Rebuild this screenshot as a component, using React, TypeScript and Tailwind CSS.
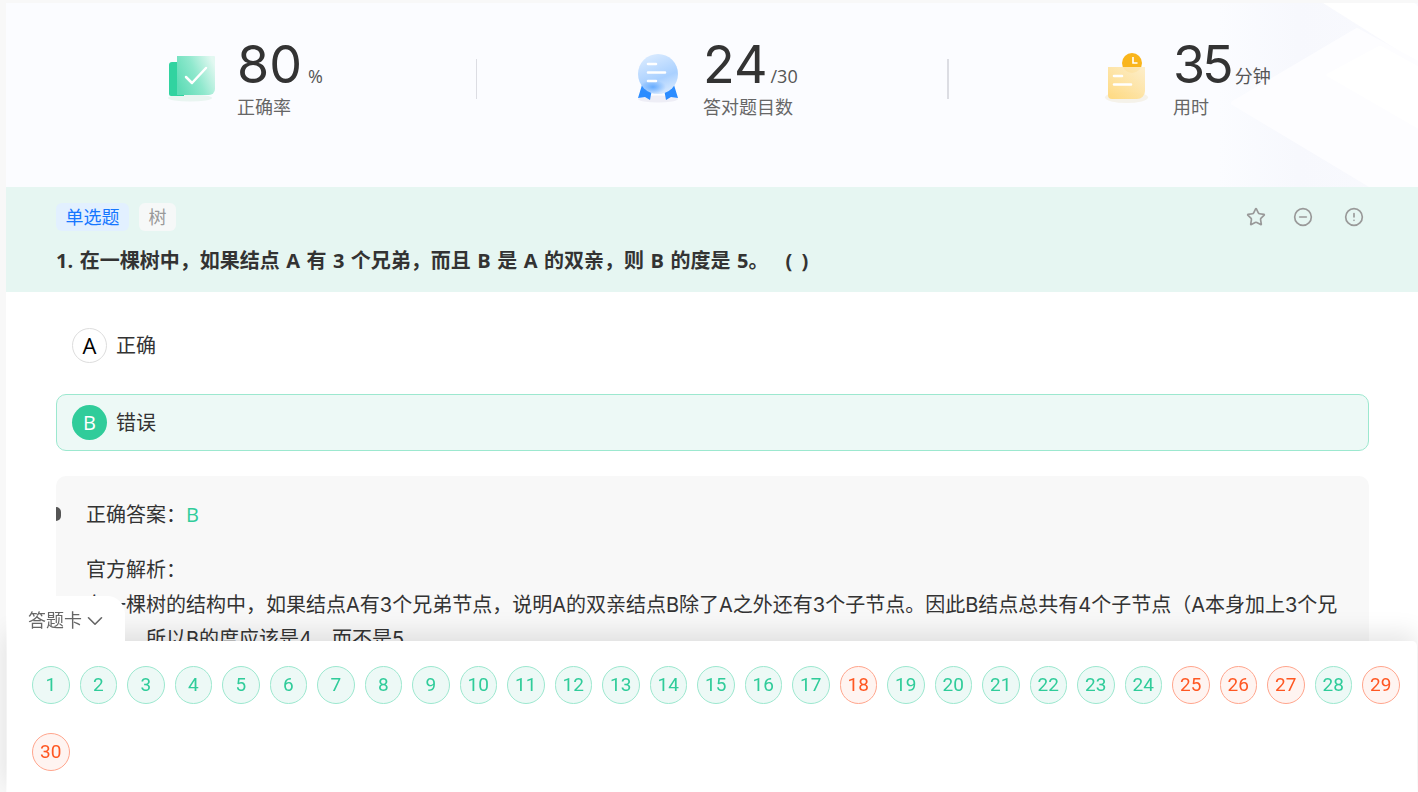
import { ChevronDown, CircleAlert, CircleMinus, Star } from "lucide-react";
import type { ReactNode } from "react";

const WRONG = [18, 25, 26, 27, 29, 30];
const NUMBERS = Array.from({ length: 30 }, (_, i) => i + 1);

// Green check book
const BookIcon = () => (
  <svg viewBox="0 0 52 50" className="w-[52px] h-[50px] shrink-0 overflow-visible">
    <defs>
      <linearGradient id="bookFront" x1="0" y1="0.7" x2="1" y2="0.25">
        <stop offset="0" stopColor="#5fdcb6" />
        <stop offset="0.5" stopColor="#8fe8cd" />
        <stop offset="1" stopColor="#e2f8f1" />
      </linearGradient>
    </defs>
    <ellipse cx="24" cy="44" rx="22" ry="3.5" fill="#e9f5f1" />
    <path d="M6 8h12v34H5a2 2 0 0 1-2-2V11a3 3 0 0 1 3-3z" fill="#31d3a0" />
    <path d="M11 2h37a1 1 0 0 1 1 1v32a6 6 0 0 1-6 6H11z" fill="url(#bookFront)" />
    <path d="M20 23l6 6 14-15" fill="none" stroke="#fff" strokeWidth="2.5" strokeLinecap="round" strokeLinejoin="round" />
  </svg>
);

// Blue medal
const MedalIcon = () => (
  <svg viewBox="0 0 52 50" className="w-[52px] h-[50px] shrink-0 overflow-visible">
    <defs>
      <linearGradient id="medalBall" x1="0.2" y1="0" x2="0.6" y2="1">
        <stop offset="0" stopColor="#dcecff" />
        <stop offset="0.65" stopColor="#a9d0ff" />
        <stop offset="1" stopColor="#d5e8ff" />
      </linearGradient>
      <radialGradient id="medalGlow">
        <stop offset="0" stopColor="#4b9dff" stopOpacity="0.75" />
        <stop offset="1" stopColor="#4b9dff" stopOpacity="0" />
      </radialGradient>
    </defs>
    <ellipse cx="26" cy="45" rx="20" ry="3.5" fill="#eeeef6" />
    <path d="M10 31l10 4-2 11-5-3-7 1z" fill="#2b8cff" />
    <path d="M42 31l-10 4 2 11 5-3 7 1z" fill="#2b8cff" />
    <circle cx="26" cy="20" r="20" fill="url(#medalBall)" />
    <ellipse cx="21" cy="33" rx="13" ry="7" fill="url(#medalGlow)" />
    <path d="M16 10h8M16 18.500h17M16 27h8" stroke="#fff" strokeWidth="2.6" strokeLinecap="round" />
  </svg>
);

// Yellow note with clock
const ClockNoteIcon = () => (
  <svg viewBox="0 0 52 50" className="w-[52px] h-[50px] shrink-0 overflow-visible">
    <defs>
      <linearGradient id="noteBody" x1="0" y1="1" x2="0.9" y2="0">
        <stop offset="0" stopColor="#ffd777" />
        <stop offset="1" stopColor="#fdecc3" />
      </linearGradient>
    </defs>
    <ellipse cx="24.500" cy="43.500" rx="21.500" ry="5.500" fill="#f5f2ea" />
    <circle cx="30" cy="9" r="10" fill="#f9b51c" />
    <path d="M31 3v6h4.500" fill="none" stroke="#fff" strokeWidth="1.6" />
    <path d="M6 13h37v24a8 8 0 0 1-8 8H10a4 4 0 0 1-4-4z" fill="url(#noteBody)" fillOpacity="0.92" />
    <path d="M12 22h8M12 30.500h17" stroke="#fff" strokeWidth="2.6" strokeLinecap="round" />
  </svg>
);

function Stat(props: {
  icon: ReactNode;
  value: string;
  unit: string;
  label: string;
  className: string;
  valueClass?: string;
  unitClass: string;
}) {
  return (
    <div className={`flex items-center gap-[19px] ${props.className}`}>
      {props.icon}
      <div>
        <div className="flex items-baseline h-[52px] leading-[52px]">
          <span className={`text-[52px] text-[#333] font-['Inter',sans-serif] ${props.valueClass ?? ""}`}>{props.value}</span>
          <span className={`text-[18px] text-[#555] ${props.unitClass}`}>{props.unit}</span>
        </div>
        <div className="mt-[4px] text-[18px] leading-[24px] text-[#666]">{props.label}</div>
      </div>
    </div>
  );
}

export default function App() {
  return (
    <div className="h-screen overflow-hidden bg-[#f8f8f8] pl-[6px] pt-[3px] font-['Open_Sans','Noto_Sans_CJK_SC',sans-serif] text-[#333]">
      <div className="bg-white h-full">
        {/* Stats header */}
        <div className="relative h-[184px] bg-[#fbfcff] overflow-hidden">
          <svg viewBox="0 0 300 184" className="absolute right-0 top-0 w-[300px] h-[184px] pointer-events-none">
            <defs>
              <linearGradient id="headerShade" x1="0" y1="0" x2="1" y2="0">
                <stop offset="0" stopColor="#f6f8fd" stopOpacity="0" />
                <stop offset="0.4" stopColor="#f7f8fd" />
                <stop offset="1" stopColor="#f9fafe" />
              </linearGradient>
            </defs>
            <path d="M100 0h200v184H100z" fill="url(#headerShade)" />
            <path d="M205 0h90a5 5 0 0 1 5 5v55z" fill="#fff" />
            <path d="M115 100L239 27l61 33v124h-45z" fill="#fdfdff" stroke="#fdfdff" strokeWidth="4" strokeLinejoin="round" />
            <path d="M210 72l52-28 38 21v59z" fill="#fff" stroke="#fff" strokeWidth="3" strokeLinejoin="round" />
          </svg>
          <div className="relative flex items-center pt-[36px]">
            <Stat className="w-[470px] pl-[160px]" icon={<BookIcon />} value="80" unit="%" unitClass="ml-[6px]" label="正确率" />
            <div className="w-px h-10 bg-[#dcdde3]" />
            <Stat className="w-[470px] pl-[155px]" icon={<MedalIcon />} value="24" unit="/30" unitClass="ml-[3px]" label="答对题目数" />
            <div className="w-[2px] h-10 bg-[#dcdde3]" />
            <Stat className="flex-1 pl-[153px]" icon={<ClockNoteIcon />} value="35" valueClass="tracking-[-3px]" unit="分钟" unitClass="ml-[4px]" label="用时" />
          </div>
        </div>

        {/* Question */}
        <div className="h-[105px] bg-[#e6f6f2] pl-[50px] pr-[54px] pt-4">
          <div className="flex items-center justify-between h-7">
            <div className="flex gap-[10px] text-[18px]">
              <span className="w-[73px] h-7 leading-7 text-center rounded-md bg-[#e2f0ff] text-[#1677ff]">单选题</span>
              <span className="w-[37px] h-7 leading-7 text-center rounded-md bg-[#f6f8f8] text-[#999]">树</span>
            </div>
            <div className="flex items-center text-[#999]">
              <Star className="w-5 h-5" strokeWidth={2} />
              <CircleMinus className="w-5 h-5 ml-[27px]" strokeWidth={2} />
              <CircleAlert className="w-5 h-5 ml-[31px]" strokeWidth={2} />
            </div>
          </div>
          <div className="mt-[15px] text-[20px] leading-[30px] font-bold [word-spacing:1.3px]">
            1. 在一棵树中，如果结点 A 有 3 个兄弟，而且 B 是 A 的双亲，则 B 的度是 5。<span className="ml-[17px] [word-spacing:4px]">( )</span>
          </div>
        </div>

        {/* Options and analysis */}
        <div className="pl-[50px] pr-[49px] pt-[25px]">
          <div className="h-[57px] flex items-center gap-[9px] pl-[15px] border border-transparent rounded-[10px]">
            <span className="w-[35px] h-[35px] rounded-full border border-[#ddd] flex items-center justify-center text-[22px] font-medium text-black">A</span>
            <span className="text-[20px]">正确</span>
          </div>
          <div className="mt-5 h-[57px] flex items-center gap-[9px] pl-[15px] border border-[#9ce8cf] bg-[#edf9f6] rounded-[10px]">
            <span className="w-[35px] h-[35px] rounded-full bg-[#30cc9a] flex items-center justify-center text-[20px] font-medium text-white">B</span>
            <span className="text-[20px]">错误</span>
          </div>
          <div className="relative mt-[25px] h-[300px] rounded-[10px] bg-[#f8f8f8] px-[30px] pt-[22px] text-[20px] leading-[34px]">
            <span className="absolute left-0 top-[31px] w-[5px] h-[14px] rounded-r-full bg-[#555]" />
            <div>
              正确答案：<span className="text-[#30cc9a]">B</span>
            </div>
            <div className="mt-[21px]">官方解析：</div>
            <div className="mt-[1px] font-['Inter','Noto_Sans_CJK_SC',sans-serif] [text-spacing-trim:space-all]">
              在一棵树的结构中，如果结点A有3个兄弟节点，说明A的双亲结点B除了A之外还有3个子节点。因此B结点总共有4个子节点（A本身加上3个兄弟），所以B的度应该是4，而不是5。
            </div>
          </div>
        </div>
      </div>

      {/* Answer sheet */}
      <div className="fixed left-[7px] right-[1px] bottom-0 h-[151px] bg-white rounded-tr-[5px] shadow-[0_-8px_24px_rgba(0,0,0,0.1)] pl-[25px] pt-[25px]">
        <div className="absolute left-0 -top-[45px] w-[118px] h-[46px] bg-white rounded-t-[18px] flex items-center justify-center pl-[4px] pt-[3px] text-[18px] text-[#666]">
          答题卡
          <ChevronDown className="w-[26px] h-[26px]" strokeWidth={1.5} />
        </div>
        <div className="flex flex-wrap gap-x-[10px] gap-y-[29px]">
          {NUMBERS.map((n) => (
            <span
              key={n}
              className={
                WRONG.includes(n)
                  ? "w-[37.5px] h-[38px] rounded-full border border-[#ffa58c] bg-[#fff4f1] text-[#ff5722] text-[19px] font-['Roboto',sans-serif] flex items-center justify-center"
                  : "w-[37.5px] h-[38px] rounded-full border border-[#9ce8cf] bg-[#edf9f6] text-[#30cc9a] text-[19px] font-['Roboto',sans-serif] flex items-center justify-center"
              }
            >
              {n}
            </span>
          ))}
        </div>
      </div>
    </div>
  );
}
